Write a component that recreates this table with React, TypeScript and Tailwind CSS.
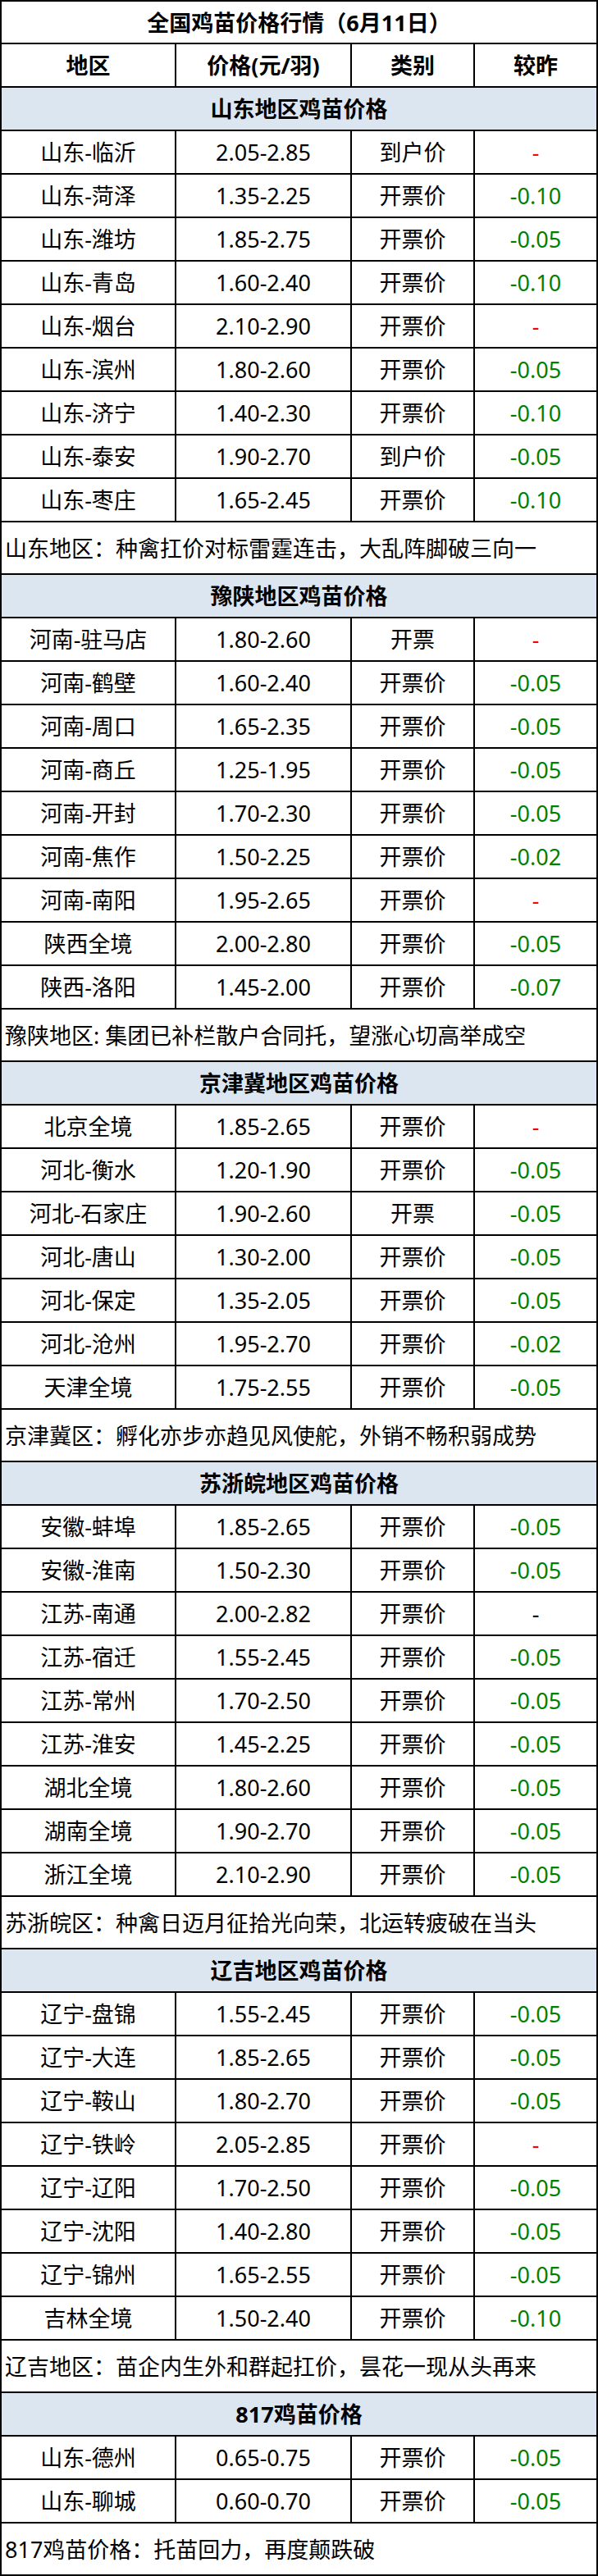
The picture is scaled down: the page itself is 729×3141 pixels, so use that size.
import React from "react";

type Row = [string, string, string, string];

const sections: { title: string; rows: Row[]; note: string }[] = [
  {
    title: "山东地区鸡苗价格",
    rows: [
      ["山东-临沂", "2.05-2.85", "到户价", "-"],
      ["山东-菏泽", "1.35-2.25", "开票价", "-0.10"],
      ["山东-潍坊", "1.85-2.75", "开票价", "-0.05"],
      ["山东-青岛", "1.60-2.40", "开票价", "-0.10"],
      ["山东-烟台", "2.10-2.90", "开票价", "-"],
      ["山东-滨州", "1.80-2.60", "开票价", "-0.05"],
      ["山东-济宁", "1.40-2.30", "开票价", "-0.10"],
      ["山东-泰安", "1.90-2.70", "到户价", "-0.05"],
      ["山东-枣庄", "1.65-2.45", "开票价", "-0.10"],
    ],
    note: "山东地区：种禽扛价对标雷霆连击，大乱阵脚破三向一",
  },
  {
    title: "豫陕地区鸡苗价格",
    rows: [
      ["河南-驻马店", "1.80-2.60", "开票", "-"],
      ["河南-鹤壁", "1.60-2.40", "开票价", "-0.05"],
      ["河南-周口", "1.65-2.35", "开票价", "-0.05"],
      ["河南-商丘", "1.25-1.95", "开票价", "-0.05"],
      ["河南-开封", "1.70-2.30", "开票价", "-0.05"],
      ["河南-焦作", "1.50-2.25", "开票价", "-0.02"],
      ["河南-南阳", "1.95-2.65", "开票价", "-"],
      ["陕西全境", "2.00-2.80", "开票价", "-0.05"],
      ["陕西-洛阳", "1.45-2.00", "开票价", "-0.07"],
    ],
    note: "豫陕地区: 集团已补栏散户合同托，望涨心切高举成空",
  },
  {
    title: "京津冀地区鸡苗价格",
    rows: [
      ["北京全境", "1.85-2.65", "开票价", "-"],
      ["河北-衡水", "1.20-1.90", "开票价", "-0.05"],
      ["河北-石家庄", "1.90-2.60", "开票", "-0.05"],
      ["河北-唐山", "1.30-2.00", "开票价", "-0.05"],
      ["河北-保定", "1.35-2.05", "开票价", "-0.05"],
      ["河北-沧州", "1.95-2.70", "开票价", "-0.02"],
      ["天津全境", "1.75-2.55", "开票价", "-0.05"],
    ],
    note: "京津冀区：孵化亦步亦趋见风使舵，外销不畅积弱成势",
  },
  {
    title: "苏浙皖地区鸡苗价格",
    rows: [
      ["安徽-蚌埠", "1.85-2.65", "开票价", "-0.05"],
      ["安徽-淮南", "1.50-2.30", "开票价", "-0.05"],
      ["江苏-南通", "2.00-2.82", "开票价", "—"],
      ["江苏-宿迁", "1.55-2.45", "开票价", "-0.05"],
      ["江苏-常州", "1.70-2.50", "开票价", "-0.05"],
      ["江苏-淮安", "1.45-2.25", "开票价", "-0.05"],
      ["湖北全境", "1.80-2.60", "开票价", "-0.05"],
      ["湖南全境", "1.90-2.70", "开票价", "-0.05"],
      ["浙江全境", "2.10-2.90", "开票价", "-0.05"],
    ],
    note: "苏浙皖区：种禽日迈月征拾光向荣，北运转疲破在当头",
  },
  {
    title: "辽吉地区鸡苗价格",
    rows: [
      ["辽宁-盘锦", "1.55-2.45", "开票价", "-0.05"],
      ["辽宁-大连", "1.85-2.65", "开票价", "-0.05"],
      ["辽宁-鞍山", "1.80-2.70", "开票价", "-0.05"],
      ["辽宁-铁岭", "2.05-2.85", "开票价", "-"],
      ["辽宁-辽阳", "1.70-2.50", "开票价", "-0.05"],
      ["辽宁-沈阳", "1.40-2.80", "开票价", "-0.05"],
      ["辽宁-锦州", "1.65-2.55", "开票价", "-0.05"],
      ["吉林全境", "1.50-2.40", "开票价", "-0.10"],
    ],
    note: "辽吉地区：苗企内生外和群起扛价，昙花一现从头再来",
  },
  {
    title: "817鸡苗价格",
    rows: [
      ["山东-德州", "0.65-0.75", "开票价", "-0.05"],
      ["山东-聊城", "0.60-0.70", "开票价", "-0.05"],
    ],
    note: "817鸡苗价格：托苗回力，再度颠跌破",
  },
];

const cell = "flex items-center justify-center border-r-2 border-black";

function Change({ v }: { v: string }) {
  if (v === "-") return <span className="text-[#ff0000]">-</span>;
  if (v === "—") return <span className="text-[#000000]">-</span>;
  return <span className="text-[#008000]">{v}</span>;
}

function DataRow({ r }: { r: Row }) {
  return (
    <div className="flex h-[53px] border-b-2 border-black">
      <div className={`w-[213px] ${cell}`}>{r[0]}</div>
      <div className={`w-[214px] ${cell}`}>{r[1]}</div>
      <div className={`w-[150px] ${cell}`}>{r[2]}</div>
      <div className="flex flex-1 items-center justify-center">
        <Change v={r[3]} />
      </div>
    </div>
  );
}

export default function App() {
  return (
    <div className="w-[729px] bg-white text-black font-['Noto_Sans','Noto_Sans_CJK_SC',sans-serif] text-[27px] leading-none">
      <div className="border-2 border-black">
        <div className="flex h-[52px] items-center justify-center border-b-2 border-black font-bold">
          全国鸡苗价格行情（6月11日）
        </div>
        <div className="flex h-[53px] border-b-2 border-black font-bold">
          <div className={`w-[213px] ${cell}`}>地区</div>
          <div className={`w-[214px] ${cell}`}>价格(元/羽)</div>
          <div className={`w-[150px] ${cell}`}>类别</div>
          <div className="flex flex-1 items-center justify-center">较昨</div>
        </div>
        {sections.map((s, si) => (
          <div key={s.title}>
            <div className="flex h-[53px] items-center justify-center border-b-2 border-black bg-[#dce6f1] font-bold">
              {s.title}
            </div>
            {s.rows.map((r) => (
              <DataRow key={r[0]} r={r} />
            ))}
            <div
              className={
                si === sections.length - 1
                  ? "flex h-[62px] items-center pl-[4px]"
                  : "flex h-[64px] items-center border-b-2 border-black pl-[4px]"
              }
            >
              {s.note}
            </div>
          </div>
        ))}
      </div>
    </div>
  );
}
